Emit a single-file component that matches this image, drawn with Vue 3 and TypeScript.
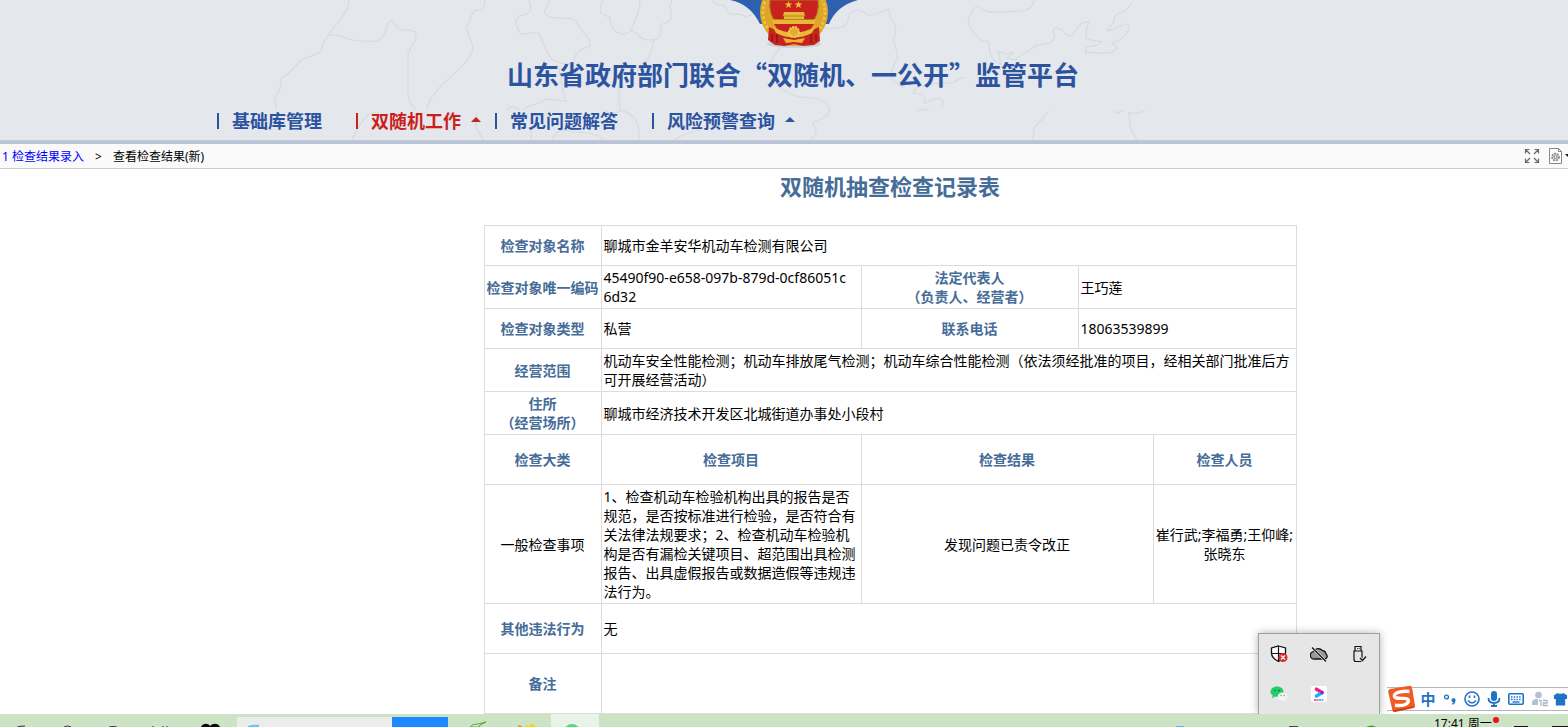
<script setup lang="ts">
interface NavItem {
  label: string
  active?: boolean
  menu?: boolean
}

const nav: NavItem[] = [
  { label: '基础库管理' },
  { label: '双随机工作', active: true, menu: true },
  { label: '常见问题解答' },
  { label: '风险预警查询', menu: true },
]

const record = {
  name: '聊城市金羊安华机动车检测有限公司',
  code: '45490f90-e658-097b-879d-0cf86051c\n6d32',
  owner: '王巧莲',
  type: '私营',
  phone: '18063539899',
  scope:
    '机动车安全性能检测；机动车排放尾气检测；机动车综合性能检测（依法须经批准的项目，经相关部门批准后方可开展经营活动）',
  address: '聊城市经济技术开发区北城街道办事处小段村',
  category: '一般检查事项',
  items:
    '1、检查机动车检验机构出具的报告是否规范，是否按标准进行检验，是否符合有关法律法规要求；2、检查机动车检验机构是否有漏检关键项目、超范围出具检测报告、出具虚假报告或数据造假等违规违法行为。',
  result: '发现问题已责令改正',
  staff: '崔行武;李福勇;王仰峰;\n张晓东',
  other: '无',
  remark: '',
}
</script>

<template>
  <div class="screen" lang="zh-CN">
    <header class="banner">
      <svg class="map" viewBox="0 0 1568 140" preserveAspectRatio="xMidYMin slice" aria-hidden="true">
        <g fill="none" stroke="#d8dade" stroke-width="1.2">
          <path d="M349 0q0 8-5 14l-21 29q-1 6-2 8c-6 5-15 6-21 10-6 7-11 13-18 17-3 6 0 8-3 13-6 7-4 13-2 19" />
          <path d="M329 35c12-1 20 6 31 6s20 3 25-8q3-14 7-12c5 4 3 8 11 9q12-1 13 4c1 9-7 13-8 20v42q2 8 8 13" />
          <path d="M485 0c-1 13-4 9-11 11-4 5-3 9-8 17 3 12 8 12 6 24-6 14-19 21-33 36q-12 13-12 22" />
          <path d="M529 0c4 15-1 14-10 16-7 9-1 10 1 17 5 3 12-2 19 0 4 9 7 20 13 26 8 6 15 5 22 4 0-12 8-14 16-17 2-7-8-13-12-22-3-7-10-5-19-6-10 0-15-2-14-8q3-5 4-10" />
          <path d="M603 0c-7 15 1 15 7 17 0 9 3 17 15 17l7-3c7 3 8 9 15 9 7 0 12 0 14-7 1-7-4-6 1-9 8-1 10-5 9-12q-2-7 1-12M640 0c0 13-5 20-10 32M654 40c-3 15-8 23-17 31M522 110c6-5 14-4 24-11l20 2c-4-10-5-25-8-36" />
          <path d="M620 80q-2 14 0 30M352 140c8-18 15-28 26-28M477 112c-4 15 2 21 7 28M506 110q8-6 13 0M531 140c0-14 0-19 10-23l12-6M552 140c8-15 13-9 20-8 14 0 28 2 31 8M604 111c9 4 14 1 18-1l12 7q6 9 5 23M674 140q15-9 26-10" />
          <path d="M712 0c3 8 13 1 15 11 7 8 12-1 18 6l9-3M824 28c12 1 24 0 24-9 3-12 13-10 20-4 6 1 12-3 20-6q3 4 2 9c5 7 8 9 4 20-1 8 5 13 3 22-8 12-10 21 8 28M780 48c-9 10-12 15-6 29 5 10 10 17 28 20 16 2 26 2 28 14" />
          <path d="M1034 0c-1 8-7 11-15 11-16 0-33 5-40-5-6 0-9 8-11 15 1 10 9 15 14 20h6c3 8-1 13 8 21l5 2-3-13 7 3 9-2-7 6 9 2c2-5 14-9 21-15l14-2c2-5 6-7 2-10 0-6 3-6 9-3 4 5 9 9 12 3 5-8 8-12 15-11-3 6-3 11-3 16 5 4 13 2 16 4-2 4-11 4-16 5v6c11-2 24 3 29-3 6-4-5-5-3-8 8 0 16-8 17-15 1-8-15 3-22 4 0-5 10-7 7-13 3-7 7-2 14-10l4-6" />
          <path d="m966 77-7 2c-8 8-23 2-33 6-8 1-12 3-13 8l9 1c4 2 3 5 2 9l9-3c8-4 13 1 8 6M917 111l6-2 6 2M811 140c8-8 5-13 1-17 9-5 16-5 17-12M1049 111l-15 17-1 12M1113 111l4 2 6-2M1128 113c4-2 7 3 10 0 3-2 5 0 7-2M1129 112l1 15 7 13" />
        </g>
      </svg>
      <svg class="emblem" viewBox="0 0 130 50" aria-hidden="true">
        <path d="M0 0c14 3 23 10 30 24h69c5-12 14-20 29-24z" fill="#2d60ad" />
        <ellipse cx="64" cy="44" rx="27" ry="4" fill="#b9bbc2" opacity=".5" />
        <circle cx="64" cy="12" r="34" fill="#dda629" />
        <circle cx="64" cy="12" r="31" fill="none" stroke="#edc03f" stroke-width="3" stroke-dasharray="3 2" />
        <path d="M40 0h48q2 14-8 26H48Q38 14 40 0z" fill="#c8221e" stroke="#a57920" />
        <path d="m55.500 1 1 2.500h2.800l-2.200 1.700.8 2.800-2.400-1.600L53 8l.9-2.800-2.200-1.700h2.800zM65.500 1l1 2.500h2.800l-2.200 1.700.8 2.800-2.400-1.600L63 8l.9-2.800-2.200-1.700h2.800z" fill="#f1bd39" transform="translate(3)" />
        <path d="M54 12h20l1 4h-1v3h11v5H43v-5h11v-3h-1z" fill="#e9b936" />
        <path d="M53 16h22M44 19.500h40" stroke="#b38420" />
        <path d="M44 24h40l-5 8H49z" fill="#c8221e" />
        <path d="M39 27l13 6 12 2 12-2 13-6 1 14-6 4-11 1-9-2-9 2-10-1-7-5z" fill="#c8221e" />
        <path d="M42 34v8m5-8v9m34-9v9m5-9v7" stroke="#8f1715" stroke-width="1.500" />
        <path d="M43 27q21 11 42 0l-3 6q-18 9-36 0z" fill="#e8b936" />
        <circle cx="64" cy="32" r="5" fill="#e2ad2e" stroke="#f4cf56" stroke-width="2" stroke-dasharray="2 1" />
        <path d="M53 38l11 2 11-2-3 5-8-1-8 1z" fill="#e7b638" />
      </svg>
      <h1 class="brand">山东省政府部门联合“双随机、一公开”监管平台</h1>
      <nav class="nav">
        <a v-for="item in nav" :key="item.label" href="#" class="nav-item" :class="{ active: item.active }">
          <span>{{ item.label }}</span>
          <i v-if="item.menu" class="up"></i>
        </a>
      </nav>
    </header>

    <div class="crumbs">
      <a href="#">1 检查结果录入</a>
      <span class="sep">&gt;</span>
      <span>查看检查结果(新)</span>
      <div class="tools">
        <button type="button" aria-label="全屏">
          <svg width="16" height="16" viewBox="0 0 16 16" fill="none" stroke="#666" stroke-width="1.200">
            <path d="M1.500 5.500v-4h4M10.500 1.500h4v4M14.500 10.500v4h-4M5.500 14.500h-4v-4M2 2l4 4M14 2l-4 4M14 14l-4-4M2 14l4-4" />
          </svg>
        </button>
        <button type="button" aria-label="页面设置">
          <svg width="22" height="16" viewBox="0 0 22 16">
            <path d="M.5.500h9l3 3v12H.5z" fill="#fff" stroke="#858585" />
            <path d="M9.500.500v3h3" fill="none" stroke="#858585" />
            <circle cx="6.500" cy="9" r="3.600" fill="#ccc" stroke="#8e8e8e" stroke-width="1.600" stroke-dasharray="2 1" />
            <circle cx="6.500" cy="9" r="1.400" fill="#fff" stroke="#888" />
            <path d="M16 6h6l-3 3z" fill="#111" />
          </svg>
        </button>
      </div>
    </div>

    <main class="content">
      <h2>双随机抽查检查记录表</h2>
      <table>
        <colgroup>
          <col class="c1" /><col class="c2" /><col class="c3" /><col class="c4" /><col class="c5" />
        </colgroup>
        <tbody>
          <tr>
            <th scope="row">检查对象名称</th>
            <td colspan="4">{{ record.name }}</td>
          </tr>
          <tr>
            <th scope="row">检查对象唯一编码</th>
            <td class="lines">{{ record.code }}</td>
            <th scope="row">法定代表人<br />（负责人、经营者）</th>
            <td colspan="2">{{ record.owner }}</td>
          </tr>
          <tr>
            <th scope="row">检查对象类型</th>
            <td>{{ record.type }}</td>
            <th scope="row">联系电话</th>
            <td colspan="2">{{ record.phone }}</td>
          </tr>
          <tr>
            <th scope="row">经营范围</th>
            <td colspan="4">{{ record.scope }}</td>
          </tr>
          <tr>
            <th scope="row">住所<br />（经营场所）</th>
            <td colspan="4">{{ record.address }}</td>
          </tr>
          <tr class="tall">
            <th scope="col">检查大类</th>
            <th scope="col">检查项目</th>
            <th scope="col" colspan="2">检查结果</th>
            <th scope="col">检查人员</th>
          </tr>
          <tr>
            <td class="mid">{{ record.category }}</td>
            <td>{{ record.items }}</td>
            <td colspan="2" class="mid">{{ record.result }}</td>
            <td class="mid lines">{{ record.staff }}</td>
          </tr>
          <tr class="tall">
            <th scope="row">其他违法行为</th>
            <td colspan="4">{{ record.other }}</td>
          </tr>
          <tr class="remark">
            <th scope="row">备注</th>
            <td colspan="4">{{ record.remark }}</td>
          </tr>
        </tbody>
      </table>
    </main>

    <div class="tray">
      <button type="button" aria-label="安全中心">
        <svg width="18" height="18" viewBox="0 0 18 18">
          <path d="M8.500 1 15.500 3v5c0 4-3 6.500-7 8.500-4-2-7-4.500-7-8.500V3z" fill="#fff" stroke="#111" stroke-width="1.300" />
          <path d="M8.500 1v15M1.500 8.500h14" stroke="#111" stroke-width="1.200" />
          <circle cx="13" cy="12.500" r="4.500" fill="#dc2a2a" />
          <path d="m11 10.500 4 4m0-4-4 4" stroke="#fff" stroke-width="1.200" />
        </svg>
      </button>
      <button type="button" aria-label="云同步">
        <svg width="18" height="18" viewBox="0 0 18 18">
          <path d="M4.500 14a3.700 3.700 0 0 1-.8-7.400 5.200 5.200 0 0 1 8.600-1.200 4.200 4.200 0 0 1 3.700 3.600 2.800 2.800 0 0 1-1 5z" fill="#999" stroke="#111" stroke-width="1.300" />
          <path d="m2 2.500 14 14" stroke="#e6e6e6" stroke-width="2.500" />
          <path d="m2 2.500 14 14" stroke="#111" stroke-width="1.300" />
        </svg>
      </button>
      <button type="button" aria-label="弹出设备">
        <svg width="18" height="18" viewBox="0 0 18 18" fill="none" stroke="#111" stroke-width="1.200">
          <path d="M5 6V1.500h6V6M4 6h8v10.500H6q-2 0-2-2z" />
          <path d="M7 3.500h.8m1 0h.8" />
          <path d="m10 13 2.500 2.500L16 11.500" stroke="#e6e6e6" stroke-width="3" />
          <path d="m10 13 2.500 2.500L16 11.500" />
        </svg>
      </button>
      <button type="button" aria-label="微信">
        <svg width="18" height="18" viewBox="0 0 18 18">
          <path d="M7 1.500c4 0 6.500 2.500 6.500 5.200 0 3-3 5-6.500 5l-2-.3-3 1.800.8-2.700C1.500 9.500.5 8.300.5 6.700.5 4 3.300 1.500 7 1.500z" fill="#20ce69" />
          <circle cx="4.800" cy="5.500" r=".8" fill="#175a34" /><circle cx="9" cy="5.500" r=".8" fill="#175a34" />
          <path d="M12.500 7.500c3 0 5 1.800 5 4 0 1.500-.8 2.500-1.700 3.200l.4 1.800-2-1c-3.500.8-6.500-1.200-6.500-4 0-2.200 2-4 4.800-4z" fill="#f4f4f4" />
          <circle cx="11" cy="10.500" r=".7" fill="#888" /><circle cx="14.200" cy="10.500" r=".7" fill="#888" />
        </svg>
      </button>
      <button type="button" aria-label="优酷">
        <svg width="18" height="18" viewBox="0 0 18 18">
          <rect x="1" y="1" width="16" height="16" rx="2" fill="#fff" />
          <path d="m6.500 4.200 5.500 3.300" stroke="#ff1c78" stroke-width="3.600" stroke-linecap="round" />
          <path d="m6.500 11 5-3" stroke="#18b4ff" stroke-width="3.600" stroke-linecap="round" />
          <circle cx="12" cy="7.600" r="1.800" fill="#8a2be0" />
          <path d="M4 15h5" stroke="#ff5b98" stroke-width="2" stroke-dasharray="2 .5" />
          <path d="M9 15h5" stroke="#4dbfff" stroke-width="2" stroke-dasharray="2 .5" />
        </svg>
      </button>
    </div>

    <div class="ime">
      <button type="button" class="sogou" aria-label="搜狗输入法">
        <svg width="30" height="28" viewBox="0 0 30 28">
          <path d="M3 4 23 .8q1.500 0 2 1.700l3 18q.3 1.800-1.200 2.500L8 27q-2 .4-2.500-1.500L1.200 7Q1 4.700 3 4z" fill="#f05a23" />
          <path d="m5.500 25.500 21-4 1.200.8-20 4.500z" fill="#c63c10" />
          <path d="M22.500 6.500c-6-.6-14 .2-15 3.600-.8 3.200 4 3.400 8 3.300 4.200-.1 6.800.8 5.600 3.600-1.300 2.800-7 3.900-13.100 3.300" fill="none" stroke="#fff" stroke-width="3.400" />
        </svg>
      </button>
      <button type="button" class="tool cn">中</button>
      <button type="button" class="tool" aria-label="中文标点">
        <svg width="16" height="16" viewBox="0 0 16 16">
          <circle cx="4.500" cy="6" r="1.900" fill="none" stroke="#1f74c7" stroke-width="1.400" />
          <path d="M9.500 9.500a2 2 0 1 1 3.900.3c0 2-1.200 3.400-3 4l-.5-1q1.300-.6 1.500-1.500-1.800-.1-1.900-1.800z" fill="#1f74c7" />
        </svg>
      </button>
      <button type="button" class="tool" aria-label="表情">
        <svg width="16" height="16" viewBox="0 0 16 16" fill="none" stroke="#1f74c7" stroke-width="1.600">
          <circle cx="8" cy="8" r="7" />
          <path d="M5.500 4.500V7m5-2.500V7M4 9.500q4 5 8 0" />
        </svg>
      </button>
      <button type="button" class="tool" aria-label="语音">
        <svg width="16" height="16" viewBox="0 0 16 16">
          <rect x="5" y="0" width="6" height="10" rx="3" fill="#1f74c7" />
          <path d="M2.500 7q0 5 5.500 5t5.500-5M8 12v3M5 15h6" fill="none" stroke="#1f74c7" stroke-width="1.800" />
        </svg>
      </button>
      <button type="button" class="tool" aria-label="软键盘">
        <svg width="16" height="16" viewBox="0 0 16 16" fill="none" stroke="#1f74c7">
          <rect x=".8" y="2.800" width="14.400" height="10.400" rx="1" stroke-width="1.600" />
          <path d="M3 6h10M3 8.500h10" stroke-width="1.300" stroke-dasharray="1.500 1.200" />
          <path d="M4.500 11h7" stroke-width="1.400" />
        </svg>
      </button>
      <button type="button" class="tool wide" aria-label="账户">
        <svg width="18" height="16" viewBox="0 0 18 16">
          <circle cx="7.500" cy="4" r="3.300" fill="#b3bfd2" />
          <path d="M1 14V11q1-3 4-3h5q3 0 4 3v3z" fill="#b3bfd2" />
          <rect x="7" y="8" width="11" height="8" fill="#fff" />
          <path d="M8 9.500h2V15M12 9.500h4v2.500h-3.500v2.500H17" fill="none" stroke="#aab6ca" stroke-width="1.300" />
        </svg>
      </button>
      <button type="button" class="tool shirt" aria-label="皮肤">
        <svg width="16" height="16" viewBox="0 0 16 16">
          <path d="M5 1.500q3 2 6 0L15 4v4h-2v7H3V8H1V4z" fill="#1f74c7" />
        </svg>
      </button>
    </div>

    <footer class="taskbar">
      <svg class="start-icons" viewBox="0 0 237 13" aria-hidden="true">
        <path d="M17 13q4-1 8-1M64 13q4-2 7 0M109 13q4-1 8 0" stroke="#333" stroke-width="1" fill="none" />
        <path d="M153 12v1m10-1v1m4-1v1" stroke="#222" />
        <path d="M201 13c2-4 7-4 9-1 3-3 8-3 10 1z" fill="#0a0a0a" />
      </svg>
      <div class="task">
        <svg viewBox="0 0 24 10" aria-hidden="true"><path d="M11 10q6-2 11-1" stroke="#63c4f3" stroke-width="2" fill="none" /></svg>
      </div>
      <div class="task blue"></div>
      <svg class="apps" viewBox="0 0 103 13" aria-hidden="true">
        <path d="M22 13q2-3 8-3l8-2-6 3-1 2z" fill="#d9efc2" stroke="#58a632" />
        <path d="m76 13 2-2 2 1 5-3 1 3 4 1z" fill="#f8d32d" />
        <path d="m70 12 4 1" stroke="#ee9b2b" stroke-width="2" />
      </svg>
      <div class="task light">
        <svg viewBox="0 0 48 13" aria-hidden="true"><circle cx="21" cy="18" r="8" fill="#4cdf76" /></svg>
      </div>
      <svg class="status" viewBox="0 0 260 13" aria-hidden="true">
        <path d="M2 12.500h8" stroke="#5fb5ea" />
        <path d="M115 12.500h9" stroke="#444" />
        <path d="M192 13q6-3 10 0z" fill="#35a31b" />
      </svg>
      <time class="clock">17:41 周一</time>
      <svg class="notice" viewBox="0 0 77 13" aria-hidden="true">
        <circle cx="5" cy="6" r="3" fill="#f40d0d" />
        <path d="M23 12.500h14M61 12.500h16" stroke="#111" />
      </svg>
    </footer>
  </div>
</template>

<style>
body {
  margin: 0;
  background: #fff;
}
</style>

<style scoped>
.screen {
  position: relative;
  display: flex;
  flex-direction: column;
  height: 100vh;
  overflow: hidden;
  color: #000;
  font-family: 'Noto Sans', 'Noto Sans CJK SC', sans-serif;
  font-size: 14px;
  line-height: 19px;
}
button {
  display: flex;
  align-items: center;
  justify-content: center;
  padding: 0;
  border: 0;
  background: none;
}
.banner {
  position: relative;
  flex: none;
  display: flex;
  flex-direction: column;
  background: #e4e7ec;
  border-bottom: 3px solid #b8c4da;
  box-shadow: inset 0 -1px #c6c9cb;
  color: #2c539f;
}
.map {
  position: absolute;
  inset: 0;
  width: 100%;
  height: 140px;
}
.emblem {
  position: relative;
  align-self: center;
  width: 130px;
  height: 50px;
  margin-left: 22px;
}
.brand {
  position: relative;
  margin: 5px 0 0 18px;
  text-align: center;
  font: 700 26px/38px 'Noto Sans CJK SC', sans-serif;
}
.nav {
  position: relative;
  display: flex;
  gap: 34px;
  padding: 16px 0 8px 217px;
}
.nav-item {
  position: relative;
  display: flex;
  align-items: center;
  gap: 13px;
  color: #2c539f;
  font-size: 18px;
  font-weight: 700;
  line-height: 24px;
  text-decoration: none;
}
.nav-item::before {
  content: '';
  width: 2px;
  height: 16px;
  background: currentColor;
}
.active {
  color: #ca211d;
}
.up {
  position: absolute;
  left: 100%;
  bottom: 11px;
  margin-left: 10px;
  border: 5px solid transparent;
  border-top: 0;
  border-bottom-color: currentColor;
}
.crumbs {
  flex: none;
  display: flex;
  align-items: center;
  height: 24px;
  padding-left: 2px;
  background: #fafafa;
  border-bottom: 1px solid #ccc;
  font-size: 12px;
}
.crumbs a {
  color: #00f;
  text-decoration: none;
}
.sep {
  width: 29px;
  text-align: center;
}
.tools {
  display: flex;
  gap: 9px;
  margin-left: auto;
  margin-right: -3px;
}
.content {
  flex: 1;
  min-height: 0;
  padding-left: 212px;
  overflow: hidden;
}
h2 {
  margin: 3px 0 25px;
  color: #466c98;
  font-size: 22px;
  line-height: 28px;
  text-align: center;
}
table {
  width: 813px;
  margin: 0 auto;
  table-layout: fixed;
  border-collapse: collapse;
}
.c1 { width: 117px; }
.c2 { width: 260px; }
.c3 { width: 217px; }
.c4 { width: 75px; }
.c5 { width: 143px; }
tr { height: 40px; }
.tall { height: 50px; }
.remark { height: 60px; }
th,
td {
  padding: 2px 1px 2px 2px;
  border: 1px solid #dcdcdc;
  text-align: left;
}
th {
  padding: 2px 1px;
  color: #466c98;
  text-align: center;
}
.mid {
  padding: 2px 1px;
  text-align: center;
}
.lines {
  white-space: pre-line;
}
.tray {
  position: absolute;
  right: 188px;
  bottom: 13px;
  display: grid;
  grid-template-columns: repeat(3, 40px);
  grid-auto-rows: 40px;
  border: 1px solid #a0a0a0;
  border-bottom: 0;
  background: #e6e6e6;
  box-shadow: 0 0 8px rgba(0, 0, 0, 0.3);
}
.ime {
  position: absolute;
  right: 0;
  bottom: 16px;
  display: flex;
  align-items: center;
  height: 22px;
  border: solid #b2b5c4;
  border-width: 1px 0;
  background: #fff;
}
.sogou {
  width: 30px;
}
.tool {
  width: 22px;
  color: #1f74c7;
}
.wide {
  width: 26px;
}
.shirt {
  width: 15px;
}
.cn {
  font: 700 15px/20px 'Noto Sans CJK SC', sans-serif;
}
.taskbar {
  position: relative;
  flex: none;
  display: flex;
  align-items: flex-end;
  height: 13px;
  overflow: hidden;
  background: #cde3c6;
}
.start-icons { width: 237px; height: 13px; }
.task {
  width: 155px;
  height: 10px;
  background: #ececec;
}
.task svg {
  display: block;
  height: 100%;
}
.blue {
  width: 56px;
  background: #1e88ff;
}
.apps { width: 103px; height: 13px; }
.light {
  width: 48px;
  height: 13px;
  background: #e9f3e7;
}
.status {
  width: 260px;
  height: 13px;
  margin-left: auto;
}
.clock {
  align-self: flex-start;
  margin-top: 1px;
  width: 57px;
  font-size: 12px;
  line-height: 18px;
  white-space: nowrap;
}
.notice { width: 77px; height: 13px; }
</style>
